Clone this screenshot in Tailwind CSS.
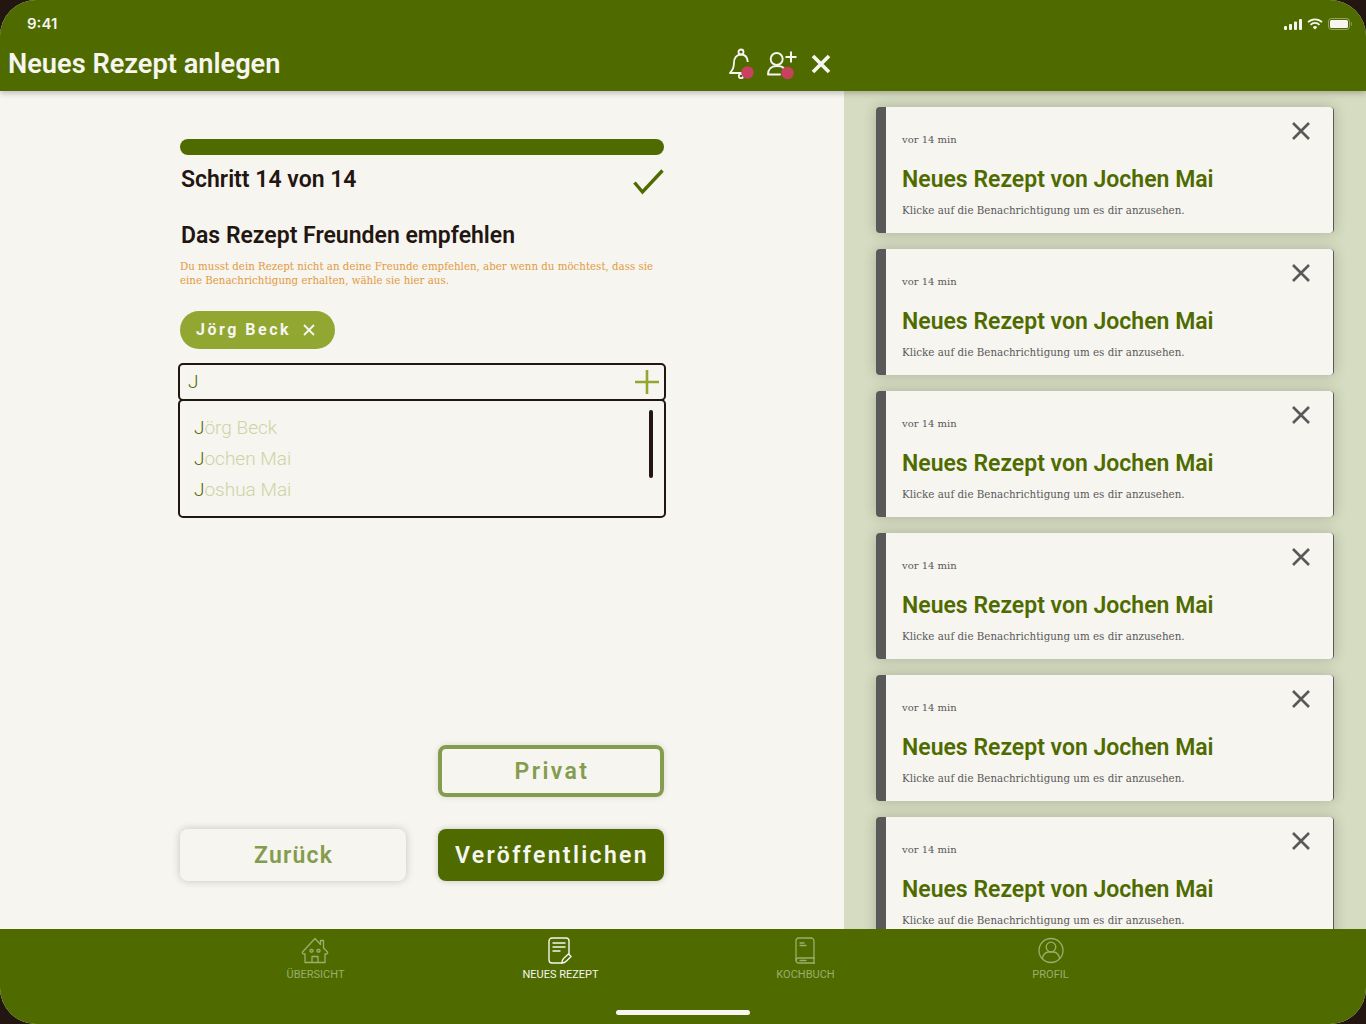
<!DOCTYPE html>
<html lang="de">
<head>
  <meta charset="UTF-8" />
  <title>Neues Rezept anlegen</title>
  <script src="https://cdn.jsdelivr.net/npm/@tailwindcss/browser@4"></script>
</head>
<body class="bg-[#231510] font-['Roboto',sans-serif]">
<div class="w-[1366px] h-[1024px] rounded-[36px] overflow-hidden flex flex-col bg-[#f6f5f0]">

  <!-- header -->
  <header class="relative z-10 h-[91px] bg-[#4f6b00] text-[#f6f5f0] shadow-[0_2px_6px_rgba(0,0,0,0.25)] shrink-0">
    <div class="h-[43px] pl-[27px] pr-[14px] pt-[15px] flex justify-between">
      <span class="font-['Inter',sans-serif] font-semibold text-[15px] leading-[18px]">9:41</span>
      <div class="flex items-center gap-[5px] h-[18px]">
        <svg width="18" height="11" viewBox="0 0 18 11" fill="#f6f5f0"><rect x="0" y="7" width="3" height="4" rx="1"/><rect x="5" y="5" width="3" height="6" rx="1"/><rect x="10" y="2.5" width="3" height="8.5" rx="1"/><rect x="15" y="0" width="3" height="11" rx="1"/></svg>
        <svg width="16" height="12" viewBox="0 0 16 12" fill="none" stroke="#f6f5f0" stroke-width="1.8"><path d="M1 4.2a10 10 0 0 1 14 0"/><path d="M3.5 6.8a6.4 6.4 0 0 1 9 0"/><path d="M8 11.5 5.8 9.2a3.1 3.1 0 0 1 4.4 0Z" fill="#f6f5f0" stroke="none"/></svg>
        <svg width="24" height="12" viewBox="0 0 24 12" fill="none"><rect x="0.5" y="0.5" width="21" height="11" rx="3" stroke="#f6f5f0" stroke-opacity="0.4"/><rect x="2" y="2" width="18" height="8" rx="1.5" fill="#f6f5f0"/><path d="M23 4v4c.7-.3 1-1.2 1-2s-.3-1.700-1-2Z" fill="#f6f5f0" fill-opacity="0.4"/></svg>
      </div>
    </div>
    <div class="h-[42px] flex items-center">
      <h1 class="w-[726px] pl-[8px] text-[27.200px] font-semibold leading-[34px]">Neues Rezept anlegen</h1>
      <svg class="ml-[2px]" width="28" height="34" viewBox="0 0 28 34" fill="none" stroke="#f6f5f0" stroke-width="1.800">
        <circle cx="13" cy="5" r="2.500"/>
        <path d="M13 7.500c-4.500 0-7 3.500-7 8 0 5-1 7.500-4 10.500h15" stroke-linejoin="round"/>
        <path d="M13 7.500c4.500 0 6.500 3 6.800 7.500"/>
        <circle cx="13" cy="29" r="2.200"/>
        <circle cx="19.500" cy="25.500" r="6.200" fill="#c8415f" stroke="none"/>
      </svg>
      <svg class="ml-[9px]" width="32" height="34" viewBox="0 0 32 34" fill="none" stroke="#f6f5f0" stroke-width="1.900">
        <circle cx="11.700" cy="12" r="6"/>
        <path d="M3 27.500c0-5 3-8.500 8.500-8.500s6 1 7 2M3 27.500h12" stroke-linecap="round"/>
        <path d="M26 4.500v11M20.500 10h11" stroke-width="2"/>
        <circle cx="22.500" cy="26" r="6.200" fill="#c8415f" stroke="none"/>
      </svg>
      <svg class="ml-[13px]" width="22" height="22" viewBox="0 0 22 22" fill="none" stroke="#f6f5f0" stroke-width="3.700"><path d="M3 3l16 16M19 3L3 19"/></svg>
    </div>
  </header>

  <main class="flex flex-1 min-h-0">
    <!-- form -->
    <section class="w-[844px] shrink-0 pl-[180px] pr-[180px] pt-[48px] pb-[48px] flex flex-col text-[#231510]">
      <div class="h-[16px] rounded-full bg-[#4f6b00]"></div>
      <div class="h-[50px] flex items-center justify-between">
        <span class="pl-[1px] text-[23px] font-semibold leading-[28px]">Schritt 14 von 14</span>
        <svg class="mt-[3px]" width="32" height="26" viewBox="0 0 32 26" fill="none" stroke="#4f6b00" stroke-width="3.400"><path d="M2.500 13.500 10.500 23 30.500 1.500"/></svg>
      </div>
      <h2 class="mt-[15px] pl-[1px] text-[23px] font-semibold leading-[32px]">Das Rezept Freunden empfehlen</h2>
      <p class="mt-[7px] font-['DejaVu_Serif',serif] text-[10.250px] leading-[14px] text-[#e39a3f]">Du musst dein Rezept nicht an deine Freunde empfehlen, aber wenn du möchtest, dass sie eine Benachrichtigung erhalten, wähle sie hier aus.</p>
      <div class="mt-[24px] w-[155px] h-[38px] rounded-full bg-[#92a632] text-[#f6f5f0] pl-[16px] flex items-center gap-[11px]">
        <span class="text-[16px] font-bold tracking-[2.500px]">Jörg Beck</span>
        <svg width="14" height="14" viewBox="0 0 14 14" fill="none" stroke="#f6f5f0" stroke-width="1.800"><path d="M2 2l10 10M12 2 2 12"/></svg>
      </div>
      <div class="mt-[14px] mx-[-2px] h-[38px] border-2 border-[#231510] rounded-[5px] pl-[8px] pr-[4px] flex items-center justify-between">
        <span class="text-[19px] font-light text-[#4f6b00]">J</span>
        <svg width="26" height="26" viewBox="0 0 26 26" stroke="#92a632" stroke-width="2.600"><path d="M1 13h24M13 1v24"/></svg>
      </div>
      <div class="mx-[-2px] h-[119px] mt-[-2px] border-2 border-[#231510] rounded-[5px] pl-[14px] pr-[11px] pt-[9px] flex justify-between">
        <ul class="pt-[2px] text-[19px] font-light leading-[31px] text-[#cdd4a4]">
          <li><span class="text-[#4f6b00]">J</span>örg Beck</li>
          <li><span class="text-[#4f6b00]">J</span>ochen Mai</li>
          <li><span class="text-[#4f6b00]">J</span>oshua Mai</li>
        </ul>
        <div class="w-[4px] h-[68px] rounded-full bg-[#231510]"></div>
      </div>
      <div class="mt-auto flex flex-col gap-[32px]">
        <div class="flex justify-end">
          <button class="w-[226px] h-[52px] pl-[2px] pt-[2px] rounded-[8px] border-4 border-[#859c4e] text-[23px] font-semibold tracking-[2.400px] text-[#859c4e] shadow-[0_0_6px_rgba(0,0,0,0.12)]">Privat</button>
        </div>
        <div class="flex justify-between">
          <button class="w-[226px] h-[52px] pl-[1px] pt-[2px] rounded-[8px] text-[23px] font-semibold tracking-[1.200px] text-[#859c4e] shadow-[0_0_8px_rgba(0,0,0,0.2)]">Zurück</button>
          <button class="w-[226px] h-[52px] pl-[2px] pt-[2px] rounded-[8px] bg-[#4f6b00] text-[23px] font-semibold tracking-[2.350px] text-[#f6f5f0] shadow-[0_0_6px_rgba(0,0,0,0.2)]">Veröffentlichen</button>
        </div>
      </div>
    </section>

    <!-- notifications -->
    <aside class="flex-1 overflow-hidden bg-[#d6dcc1] pl-[32px] pr-[32px] pt-[16px] flex flex-col gap-[16px]">
      <article class="relative shrink-0 h-[126px] rounded-[4px] bg-[#595959] pl-[10px] pr-[1px] shadow-[0_0_14px_rgba(0,0,0,0.2)]">
        <div class="h-full rounded-r-[3px] bg-[#f6f5f0] pl-[16px] pt-[26px]">
          <p class="font-['DejaVu_Serif',serif] text-[10px] leading-[14px] text-[#595959]">vor 14 min</p>
          <h3 class="mt-[19px] text-[23px] font-semibold leading-[28px] text-[#4f6b00]">Neues Rezept von Jochen Mai</h3>
          <p class="mt-[9px] font-['DejaVu_Serif',serif] text-[10.300px] leading-[14px] text-[#595959]">Klicke auf die Benachrichtigung um es dir anzusehen.</p>
        </div>
        <svg class="absolute top-[14px] right-[23px]" width="20" height="20" viewBox="0 0 20 20" fill="none" stroke="#595959" stroke-width="2.600"><path d="M2 2l16 16M18 2 2 18"/></svg>
      </article>
      <article class="relative shrink-0 h-[126px] rounded-[4px] bg-[#595959] pl-[10px] pr-[1px] shadow-[0_0_14px_rgba(0,0,0,0.2)]">
        <div class="h-full rounded-r-[3px] bg-[#f6f5f0] pl-[16px] pt-[26px]">
          <p class="font-['DejaVu_Serif',serif] text-[10px] leading-[14px] text-[#595959]">vor 14 min</p>
          <h3 class="mt-[19px] text-[23px] font-semibold leading-[28px] text-[#4f6b00]">Neues Rezept von Jochen Mai</h3>
          <p class="mt-[9px] font-['DejaVu_Serif',serif] text-[10.300px] leading-[14px] text-[#595959]">Klicke auf die Benachrichtigung um es dir anzusehen.</p>
        </div>
        <svg class="absolute top-[14px] right-[23px]" width="20" height="20" viewBox="0 0 20 20" fill="none" stroke="#595959" stroke-width="2.600"><path d="M2 2l16 16M18 2 2 18"/></svg>
      </article>
      <article class="relative shrink-0 h-[126px] rounded-[4px] bg-[#595959] pl-[10px] pr-[1px] shadow-[0_0_14px_rgba(0,0,0,0.2)]">
        <div class="h-full rounded-r-[3px] bg-[#f6f5f0] pl-[16px] pt-[26px]">
          <p class="font-['DejaVu_Serif',serif] text-[10px] leading-[14px] text-[#595959]">vor 14 min</p>
          <h3 class="mt-[19px] text-[23px] font-semibold leading-[28px] text-[#4f6b00]">Neues Rezept von Jochen Mai</h3>
          <p class="mt-[9px] font-['DejaVu_Serif',serif] text-[10.300px] leading-[14px] text-[#595959]">Klicke auf die Benachrichtigung um es dir anzusehen.</p>
        </div>
        <svg class="absolute top-[14px] right-[23px]" width="20" height="20" viewBox="0 0 20 20" fill="none" stroke="#595959" stroke-width="2.600"><path d="M2 2l16 16M18 2 2 18"/></svg>
      </article>
      <article class="relative shrink-0 h-[126px] rounded-[4px] bg-[#595959] pl-[10px] pr-[1px] shadow-[0_0_14px_rgba(0,0,0,0.2)]">
        <div class="h-full rounded-r-[3px] bg-[#f6f5f0] pl-[16px] pt-[26px]">
          <p class="font-['DejaVu_Serif',serif] text-[10px] leading-[14px] text-[#595959]">vor 14 min</p>
          <h3 class="mt-[19px] text-[23px] font-semibold leading-[28px] text-[#4f6b00]">Neues Rezept von Jochen Mai</h3>
          <p class="mt-[9px] font-['DejaVu_Serif',serif] text-[10.300px] leading-[14px] text-[#595959]">Klicke auf die Benachrichtigung um es dir anzusehen.</p>
        </div>
        <svg class="absolute top-[14px] right-[23px]" width="20" height="20" viewBox="0 0 20 20" fill="none" stroke="#595959" stroke-width="2.600"><path d="M2 2l16 16M18 2 2 18"/></svg>
      </article>
      <article class="relative shrink-0 h-[126px] rounded-[4px] bg-[#595959] pl-[10px] pr-[1px] shadow-[0_0_14px_rgba(0,0,0,0.2)]">
        <div class="h-full rounded-r-[3px] bg-[#f6f5f0] pl-[16px] pt-[26px]">
          <p class="font-['DejaVu_Serif',serif] text-[10px] leading-[14px] text-[#595959]">vor 14 min</p>
          <h3 class="mt-[19px] text-[23px] font-semibold leading-[28px] text-[#4f6b00]">Neues Rezept von Jochen Mai</h3>
          <p class="mt-[9px] font-['DejaVu_Serif',serif] text-[10.300px] leading-[14px] text-[#595959]">Klicke auf die Benachrichtigung um es dir anzusehen.</p>
        </div>
        <svg class="absolute top-[14px] right-[23px]" width="20" height="20" viewBox="0 0 20 20" fill="none" stroke="#595959" stroke-width="2.600"><path d="M2 2l16 16M18 2 2 18"/></svg>
      </article>
      <article class="relative shrink-0 h-[126px] rounded-[4px] bg-[#595959] pl-[10px] pr-[1px] shadow-[0_0_14px_rgba(0,0,0,0.2)]">
        <div class="h-full rounded-r-[3px] bg-[#f6f5f0] pl-[16px] pt-[26px]">
          <p class="font-['DejaVu_Serif',serif] text-[10px] leading-[14px] text-[#595959]">vor 14 min</p>
          <h3 class="mt-[19px] text-[23px] font-semibold leading-[28px] text-[#4f6b00]">Neues Rezept von Jochen Mai</h3>
          <p class="mt-[9px] font-['DejaVu_Serif',serif] text-[10.300px] leading-[14px] text-[#595959]">Klicke auf die Benachrichtigung um es dir anzusehen.</p>
        </div>
        <svg class="absolute top-[14px] right-[23px]" width="20" height="20" viewBox="0 0 20 20" fill="none" stroke="#595959" stroke-width="2.600"><path d="M2 2l16 16M18 2 2 18"/></svg>
      </article>
    </aside>
  </main>

  <!-- tab bar -->
  <nav class="relative z-10 h-[95px] shrink-0 bg-[#4f6b00] flex flex-col">
    <div class="pl-[193px] pt-[8px] grid grid-cols-[245px_245px_245px_245px] text-[11px] leading-[14px] text-center">
      <a class="flex flex-col items-center gap-[4px] text-[#9bae6c]">
        <svg class="mr-[2px]" width="28" height="27" viewBox="0 0 28 27" fill="none" stroke="#9bae6c" stroke-width="1.300" stroke-linejoin="round"><path d="M1.500 15 14 1.500l5.500 6V3.500h3v7.500L26.500 15c.5 1-.3 2-1.500 2h-1v8.500H4V17H3c-1.200 0-2-1-1.500-2Z"/><path d="M11 25.500v-6h6v6"/><rect x="9" y="12.500" width="3" height="2.500" rx="1"/><rect x="16" y="12.500" width="3" height="2.500" rx="1"/></svg>
        <span>ÜBERSICHT</span>
      </a>
      <a class="flex flex-col items-center gap-[4px] text-[#f6f5f0]">
        <svg class="mr-[4px]" width="28" height="27" viewBox="0 0 28 27" fill="none" stroke="#f6f5f0" stroke-width="1.400" stroke-linecap="round"><path d="M17 26H7A3 3 0 0 1 4 23V4A3 3 0 0 1 7 1h14a3 3 0 0 1 3 3v13"/><path d="M8 6h12M8 10h12M8 14h7"/><path d="M17 26c0-3 .8-4 2-5l4.500-4 2.500 2.500-4.500 4.500c-1 1-2.500 2-4.500 2Z"/></svg>
        <span>NEUES REZEPT</span>
      </a>
      <a class="flex flex-col items-center gap-[4px] text-[#9bae6c]">
        <svg class="mr-[2px]" width="28" height="27" viewBox="0 0 28 27" fill="none" stroke="#9bae6c" stroke-width="1.300" stroke-linecap="round"><path d="M23 21.500V4a3 3 0 0 0-3-3H8A3 3 0 0 0 5 4v19.500A2.500 2.500 0 0 0 7.500 26H23.500"/><path d="M5 23.500a2.500 2.500 0 0 1 2.500-2.500H23v5"/><path d="M9 6h4M9 8.500h6M9 23.500h6"/></svg>
        <span>KOCHBUCH</span>
      </a>
      <a class="flex flex-col items-center gap-[4px] text-[#9bae6c]">
        <svg width="28" height="27" viewBox="0 0 28 27" fill="none" stroke="#9bae6c" stroke-width="1.300"><circle cx="14" cy="13.500" r="12"/><circle cx="14" cy="10" r="4.800"/><path d="M5.500 22c0-4 3-7 6-7h5c3 0 6 3 6 7"/></svg>
        <span>PROFIL</span>
      </a>
    </div>
    <div class="mt-auto mb-[9px] ml-[616px] w-[134px] h-[5px] rounded-full bg-[#f6f5f0]"></div>
  </nav>
</div>
</body>
</html>
